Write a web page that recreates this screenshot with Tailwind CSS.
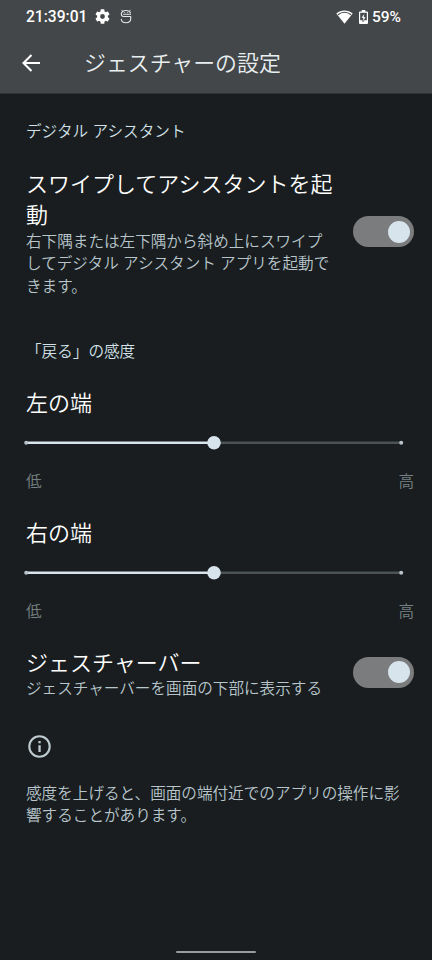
<!DOCTYPE html>
<html lang="ja">
<head>
<meta charset="utf-8">
<title>ジェスチャーの設定</title>
<script src="https://cdn.jsdelivr.net/npm/@tailwindcss/browser@4"></script>
</head>
<body class="w-[432px] h-[960px] overflow-hidden bg-[#191d1f] font-['Noto_Sans_CJK_JP',sans-serif] font-[350] text-[15.6px] leading-[22.5px] text-[#b8c6cc]">
<div class="flex h-[960px] flex-col">
  <header class="h-[94px] shrink-0 border-b border-[#303436] bg-[#434749] text-white">
    <div class="flex h-[33px] items-center pl-[26px] pr-[31px] font-[Roboto,sans-serif] text-[15.6px] font-medium">
      <span class="w-[69px] whitespace-nowrap pt-px">21:39:01</span>
      <svg class="-mt-px h-[15px] w-[15px] shrink-0 -ml-[0.5px]" viewBox="2 2 20 20" fill="#fff"><path d="M19.14 12.94c.04-.3.06-.61.06-.94s-.02-.64-.07-.94l2.03-1.58c.18-.14.23-.41.12-.61l-1.92-3.32c-.12-.22-.37-.29-.59-.22l-2.39.96c-.5-.38-1.03-.7-1.62-.94l-.36-2.54A.48.48 0 0 0 13.92 2.4h-3.84c-.24 0-.43.17-.47.41l-.36 2.54c-.59.24-1.13.57-1.62.94l-2.39-.96c-.22-.08-.47 0-.59.22L2.74 8.87c-.12.21-.08.47.12.61l2.03 1.58c-.05.3-.09.63-.09.94s.02.64.07.94l-2.03 1.58c-.18.14-.23.41-.12.61l1.92 3.32c.12.22.37.29.59.22l2.39-.96c.5.38 1.03.7 1.62.94l.36 2.54c.05.24.24.41.48.41h3.84c.24 0 .44-.17.47-.41l.36-2.54c.59-.24 1.13-.56 1.62-.94l2.39.96c.22.08.47 0 .59-.22l1.92-3.32c.12-.22.07-.47-.12-.61l-2.01-1.58zM12 15.2A3.2 3.2 0 1 1 12 8.8a3.2 3.2 0 0 1 0 6.4z"/></svg>
      <svg class="-mt-px ml-[10.5px] h-[15px] w-[12px] shrink-0" viewBox="0 0 12 15" fill="none" stroke="#e5e7e7" stroke-width="1.1" stroke-linecap="round" stroke-linejoin="round"><path d="M10.6 5.2H3.6M10.4 3.8C9.8 2.2 8.6 1.5 6 1.5S1.3 2.9 1.3 5C1.3 6.8 2.2 7.5 3.6 7.5H10.7V9.8C10.7 12.6 8.6 13.7 6 13.7S1.5 12.6 1.3 10.2"/><path d="M1.8 1.2 2.6 2.2M10.2 1.2 9.4 2.2M4.4 3.5v.1M7.6 3.5v.1" stroke-width=".9"/></svg>
      <svg class="ml-auto h-[14px] w-[17px]" viewBox="0 0 17 14"><path d="M.3 3.5C4.8-.6 12.2-.6 16.7 3.5L8.5 13.7Z" fill="#fff"/><path d="M1.9 4.7C6 1.6 11 1.6 15.1 4.7" fill="none" stroke="#434749" stroke-width="1.1"/></svg>
      <svg class="ml-[6px] h-[14px] w-[9px]" viewBox="0 0 9 14"><path d="M2.7 0h3.6v1.4H8q1 0 1 1V13q0 1-1 1H1q-1 0-1-1V2.4q0-1 1-1h1.7Z" fill="#fff"/><path d="M1.2 2.8h6.6v7.4H1.2Z" fill="#434749"/><path d="M5.2 3.2 2.1 8h1.8v4L7 7H5.2Z" fill="#fff" stroke="#434749" stroke-width=".6"/></svg>
      <span class="ml-[4px] w-[29px] whitespace-nowrap pt-px text-[15.5px]">59%</span>
    </div>
    <div class="flex h-[60px] items-center pl-[22px]">
      <svg class="h-[18px] w-[18px]" viewBox="0 0 18 18" fill="none" stroke="#fff" stroke-width="2.1"><path d="M9.5 1 1.5 9l8 8M1.8 9H18"/></svg>
      <h1 class="-mt-[3px] ml-[44px] text-[21.9px] leading-[32px] text-[#e9eff1]">ジェスチャーの設定</h1>
    </div>
  </header>

  <main class="pl-[26px] pr-[18px]">
    <h2 class="mt-[25px] text-[#d3e2e9] [word-spacing:1px]">デジタル アシスタント</h2>
    <section class="mt-[26px] flex items-center justify-between">
      <div class="w-[312px]">
        <div class="-mt-px text-[22px] leading-[31px] text-white">スワイプしてアシスタントを起<br>動</div>
        <p class="[word-spacing:0.7px]">右下隅または左下隅から斜め上にスワイプ<br>してデジタル アシスタント アプリを起動で<br>きます。</p>
      </div>
      <div class="flex h-[31px] w-[61px] shrink-0 items-center justify-end rounded-full bg-[#7b7c7d] pr-[4px]"><div class="h-[22px] w-[22px] rounded-full bg-[#d7e4eb]"></div></div>
    </section>

    <h2 class="mt-[43px] text-[#d3e2e9]">「戻る」の感度</h2>
    <section class="mt-[23px]">
      <h3 class="text-[22px] leading-[32px] text-white">左の端</h3>
      <svg class="-ml-[4px] mt-[15px] block h-[20px] w-[384px]" viewBox="22 432 384 20"><path d="M214 442.8H401" stroke="#4b5354" stroke-width="2.4"/><path d="M26 442.8H214" stroke="#d7e4eb" stroke-width="2.6"/><circle cx="26.2" cy="442.8" r="2" fill="#b7c3c8"/><circle cx="401.2" cy="442.8" r="2" fill="#b7c3c8"/><circle cx="214" cy="442.8" r="6.8" fill="#d7e4eb"/></svg>
      <div class="mt-[17px] flex justify-between text-[#778184]"><span>低</span><span>高</span></div>
    </section>
    <section class="mt-[23.5px]">
      <h3 class="text-[22px] leading-[32px] text-white">右の端</h3>
      <svg class="-ml-[4px] mt-[15px] block h-[20px] w-[384px]" viewBox="22 432 384 20"><path d="M214 442.8H401" stroke="#4b5354" stroke-width="2.4"/><path d="M26 442.8H214" stroke="#d7e4eb" stroke-width="2.6"/><circle cx="26.2" cy="442.8" r="2" fill="#b7c3c8"/><circle cx="401.2" cy="442.8" r="2" fill="#b7c3c8"/><circle cx="214" cy="442.8" r="6.8" fill="#d7e4eb"/></svg>
      <div class="mt-[17px] flex justify-between text-[#778184]"><span>低</span><span>高</span></div>
    </section>

    <section class="mt-[25px] flex items-center justify-between">
      <div>
        <h3 class="text-[22px] leading-[31px] text-white">ジェスチャーバー</h3>
        <p class="-mt-px">ジェスチャーバーを画面の下部に表示する</p>
      </div>
      <div class="flex h-[31px] w-[61px] shrink-0 items-center justify-end rounded-full bg-[#7b7c7d] pr-[4px]"><div class="h-[22px] w-[22px] rounded-full bg-[#d7e4eb]"></div></div>
    </section>

    <svg class="ml-[2px] mt-[36px] h-[23px] w-[23px]" viewBox="0 0 23 23"><circle cx="11.5" cy="11.5" r="10.2" fill="none" stroke="#bdcbd1" stroke-width="2.1"/><path d="M10.4 6h2.3v2.2h-2.3zM10.4 10.2h2.3V17h-2.3z" fill="#bdcbd1"/></svg>
    <p class="-mr-2 mt-[23px]">感度を上げると、画面の端付近でのアプリの操作に影<br>響することがあります。</p>
  </main>
  <div class="mx-auto mt-auto mb-[7px] h-[2.5px] w-[80px] shrink-0 rounded-full bg-[#999b9c]"></div>
</div>
</body>
</html>
